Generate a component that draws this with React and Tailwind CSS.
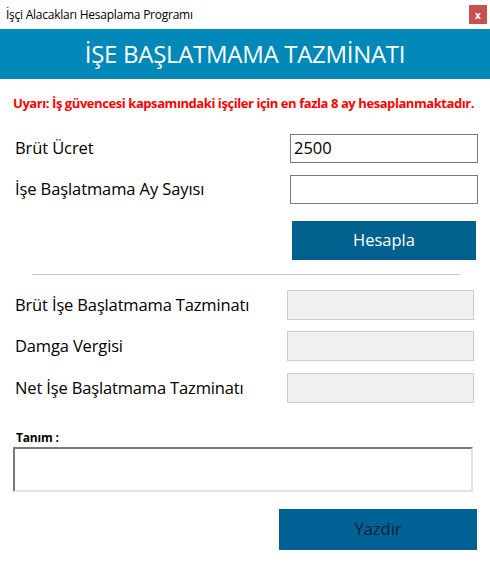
export default function App() {
  const font = { fontFamily: '"Open Sans", "Noto Sans", sans-serif' };
  return (
    <div className="w-[490px] h-[564px] bg-white overflow-hidden flex flex-col" style={font}>
      <div className="h-[29px] flex items-center justify-between pl-[6px] pr-[3px]">
        <span className="text-[12px] text-black tracking-[-0.25px]">İşçi Alacakları Hesaplama Programı</span>
        <div className="w-[18px] h-[19px] bg-[#c75050] flex items-center justify-center text-white text-[10px] font-bold leading-none">x</div>
      </div>
      <div className="h-[50px] bg-[#0088b8] flex items-center justify-center text-white text-[24px] tracking-[-0.3px]">İŞE BAŞLATMAMA TAZMİNATI</div>
      <div className="mt-[15px] pl-[13px] text-[#ff0000] text-[13px] font-bold tracking-[-0.43px] leading-[18px]">Uyarı: İş güvencesi kapsamındaki işçiler için en fazla 8 ay hesaplanmaktadır.</div>
      <div className="mt-[22px] flex flex-col">
        <div className="flex items-center justify-between pl-[15px] pr-[12px] h-[29px]">
          <span className="text-[16.5px] text-black tracking-[-0.1px]">Brüt Ücret</span>
          <div className="w-[188px] h-[29px] border border-[#7a7a7a] flex items-center pl-[3px] text-[16.5px] text-black">2500</div>
        </div>
        <div className="mt-[12px] flex items-center justify-between pl-[15px] pr-[12px] h-[29px]">
          <span className="text-[16.5px] text-black tracking-[-0.1px]">İşe Başlatmama Ay Sayısı</span>
          <div className="w-[188px] h-[29px] border border-[#7a7a7a]"></div>
        </div>
        <div className="mt-[17px] flex justify-end pr-[14px]">
          <div className="w-[184px] h-[39px] bg-[#00618f] flex items-center justify-center text-white text-[16.5px]">Hesapla</div>
        </div>
      </div>
      <div className="mt-[14px] mx-[32px] w-[428px] h-px bg-[#c8c8c8]"></div>
      <div className="mt-[15px] flex flex-col gap-[11px] pl-[15px] pr-[16px]">
        {["Brüt İşe Başlatmama Tazminatı", "Damga Vergisi", "Net İşe Başlatmama Tazminatı"].map((l, i) => (
          <div key={i} className={"flex items-center justify-between h-[30px]" + (i === 2 ? " mt-[1px]" : "")}>
            <span className="text-[16.5px] text-black tracking-[-0.15px]">{l}</span>
            <div className="w-[187px] h-[30px] bg-[#f0f0f0] border border-[#cccccc]"></div>
          </div>
        ))}
      </div>
      <div className="mt-[28px] pl-[16px] text-[12px] font-bold text-black leading-[14px] tracking-[-0.2px]">Tanım :</div>
      <div className="mt-[2px] ml-[13px] w-[460px] h-[45px] border-2 border-t-[#7a7a7a] border-l-[#7a7a7a] border-b-[#e3e3e3] border-r-[#e3e3e3] bg-white"></div>
      <div className="mt-[17px] flex justify-end pr-[13px]">
        <div className="w-[198px] h-[41px] bg-[#006194] flex items-center justify-center text-[#0d2233] text-[16.5px]">Yazdır</div>
      </div>
    </div>
  );
}
